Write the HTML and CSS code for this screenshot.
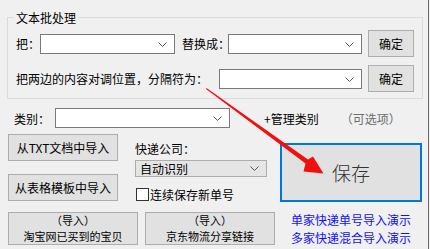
FILE: index.html
```html
<!DOCTYPE html>
<html lang="zh-CN">
<head>
    <meta charset="UTF-8">
    <title>批量导入快递单号</title>
    <link rel="stylesheet" href="styles.css">
</head>
<body>
    <div class="window">
        <fieldset class="group">
            <legend>文本批处理</legend>
            <div class="group-row first">
                <span class="label lbl-ba">把：</span>
                <div class="combo combo-from">
                    <svg class="chev" width="9" height="6" viewBox="0 0 9 6"><polyline points="0.5,0.5 4.5,4.5 8.5,0.5" /></svg>
                </div>
                <span class="label lbl-to">替换成：</span>
                <div class="combo combo-to">
                    <svg class="chev" width="9" height="6" viewBox="0 0 9 6"><polyline points="0.5,0.5 4.5,4.5 8.5,0.5" /></svg>
                </div>
                <button class="btn btn-ok">确定</button>
            </div>
            <div class="group-row">
                <span class="label lbl-swap">把两边的内容对调位置，分隔符为：</span>
                <div class="combo combo-sep">
                    <svg class="chev" width="9" height="6" viewBox="0 0 9 6"><polyline points="0.5,0.5 4.5,4.5 8.5,0.5" /></svg>
                </div>
                <button class="btn btn-ok">确定</button>
            </div>
        </fieldset>

        <div class="category-row">
            <span class="label lbl-cat">类别：</span>
            <div class="combo combo-cat">
                <svg class="chev" width="9" height="6" viewBox="0 0 9 6"><polyline points="0.5,0.5 4.5,4.5 8.5,0.5" /></svg>
            </div>
            <span class="manage">+管理类别</span>
            <span class="optional">（可选项）</span>
        </div>

        <div class="lower">
            <div class="lower-left">
                <div class="top-part">
                    <div class="btn-col">
                        <button class="btn btn-import">从TXT文档中导入</button>
                        <button class="btn btn-import">从表格模板中导入</button>
                    </div>
                    <div class="express">
                        <div class="express-label">快递公司：</div>
                        <div class="combo combo-express">
                            <span>自动识别</span>
                            <svg class="chev" width="9" height="6" viewBox="0 0 9 6"><polyline points="0.5,0.5 4.5,4.5 8.5,0.5" /></svg>
                        </div>
                        <label class="check-row"><span class="check"></span>连续保存新单号</label>
                    </div>
                </div>
                <div class="bottom-row">
                    <button class="btn btn-two">（导入）<br>淘宝网已买到的宝贝</button>
                    <button class="btn btn-two">（导入）<br>京东物流分享链接</button>
                </div>
            </div>
            <div class="lower-right">
                <button class="btn btn-save">保存</button>
                <div class="links">
                    <a href="#">单家快递单号导入演示</a>
                    <a href="#">多家快递混合导入演示</a>
                </div>
            </div>
        </div>

        <!-- 红色提示箭头 -->
        <svg class="arrow" width="430" height="249" viewBox="0 0 430 249">
            <polygon points="206.5,88 308,159.5 313,156.5 323.5,173.5 303.5,171.5 305.5,163.5 206,89" />
        </svg>
    </div>
</body>
</html>
```

FILE: styles.css
```css
body {
    margin: 0;
    background-color: #f0f0f0;
    font-family: "Noto Sans CJK SC", "Microsoft YaHei", sans-serif;
    font-size: 12px;
    color: #000;
}
.window {
    position: relative;
    width: 429px;
    height: 249px;
    padding: 9px 0 0 7px;
    box-sizing: border-box;
    border-right: 1px solid #6a6a6a;
    overflow: hidden;
}
.group {
    width: 416px;
    box-sizing: border-box;
    margin: 0;
    padding: 0 0 6px 8px;
    border: 1px solid #dcdcdc;
}
.group legend {
    margin-left: -2px;
    padding: 0 2px;
    line-height: 17px;
}
.group-row {
    display: flex;
    align-items: center;
    height: 27px;
    margin-top: 8px;
}
.group-row.first {
    margin-top: 4px;
}
.label {
    white-space: nowrap;
    line-height: 17px;
}
.lbl-ba {
    width: 24px;
}
.lbl-to {
    width: 46px;
    margin-left: 7px;
}
.lbl-swap {
    width: 203px;
}
.combo {
    position: relative;
    height: 20px;
    box-sizing: border-box;
    background-color: #fff;
    border: 1px solid #7a7a7a;
}
.chev {
    position: absolute;
    right: 7px;
    top: 7px;
}
.chev polyline {
    fill: none;
    stroke: #555;
    stroke-width: 1;
}
.combo-from {
    width: 135px;
}
.combo-to {
    width: 134px;
}
.combo-sep {
    width: 143px;
}
.btn {
    box-sizing: border-box;
    padding: 0;
    margin: 0;
    background-color: #e1e1e1;
    border: 1px solid #adadad;
    font-family: "Noto Sans CJK SC", "Microsoft YaHei", sans-serif;
    font-size: 12px;
    color: #000;
}
.btn-ok {
    width: 46px;
    height: 27px;
    margin-left: 6px;
}
.category-row {
    display: flex;
    align-items: center;
    height: 20px;
    margin-top: 9px;
    padding-left: 7px;
}
.lbl-cat {
    width: 41px;
}
.combo-cat {
    width: 175px;
}
.manage {
    margin-left: 34px;
    white-space: nowrap;
}
.optional {
    margin-left: 22px;
    color: #6d6d6d;
    white-space: nowrap;
}
.lower {
    display: flex;
    margin-top: 6px;
    padding-left: 1px;
}
.lower-left {
    width: 267px;
}
.top-part {
    display: flex;
    height: 67px;
}
.btn-col {
    display: flex;
    flex-direction: column;
    gap: 13px;
}
.btn-import {
    width: 110px;
    height: 27px;
}
.express {
    margin-left: 17px;
}
.express-label {
    margin-top: 6px;
    line-height: 17px;
}
.combo-express {
    width: 132px;
    height: 17px;
    margin-top: 3px;
    background-color: #e5e5e5;
    border-color: #adadad;
    line-height: 15px;
    padding-left: 4px;
}
.combo-express .chev {
    top: 5px;
}
.check-row {
    display: flex;
    align-items: center;
    margin-top: 9px;
    margin-left: 1px;
    line-height: 17px;
    white-space: nowrap;
}
.check {
    width: 13px;
    height: 13px;
    box-sizing: border-box;
    border: 1px solid #333;
    background-color: #fff;
    margin-right: 1px;
}
.bottom-row {
    display: flex;
    gap: 7px;
    margin-top: 11px;
}
.btn-two {
    width: 130px;
    height: 33px;
    font-size: 11px;
    line-height: 15.5px;
}
.lower-right {
    margin-left: 5px;
    padding-top: 9px;
    width: 142px;
}
.btn-save {
    width: 142px;
    height: 59px;
    border: 2px solid #0078d7;
    font-size: 19px;
    color: #333;
    font-weight: 300;
}
.links {
    display: flex;
    flex-direction: column;
    align-items: center;
    margin-top: 9px;
    line-height: 18px;
}
.links a {
    color: #1010ff;
    text-decoration: none;
}
.arrow {
    position: absolute;
    left: 0;
    top: 0;
    pointer-events: none;
}
.arrow polygon {
    fill: #f01010;
}
```
